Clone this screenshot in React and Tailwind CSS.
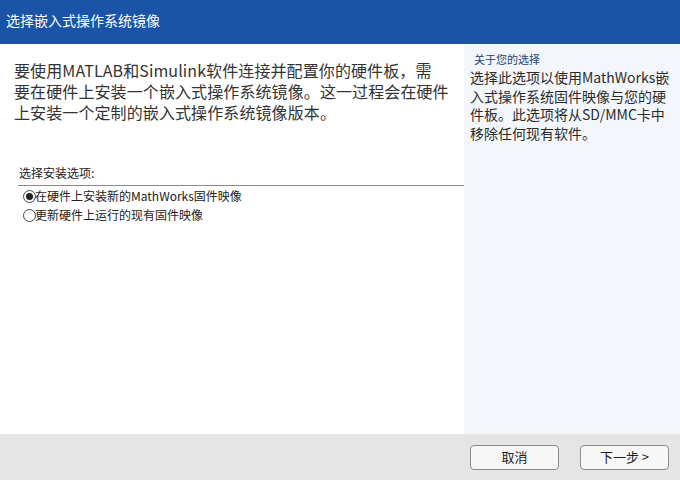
import React, { useState } from 'react';

const font = { fontFamily: '"Noto Sans CJK SC", "Noto Sans", sans-serif' };

const introLines = [
  '要使用MATLAB和Simulink软件连接并配置你的硬件板，需',
  '要在硬件上安装一个嵌入式操作系统镜像。这一过程会在硬件',
  '上安装一个定制的嵌入式操作系统镜像版本。',
];

const options = [
  '在硬件上安装新的MathWorks固件映像',
  '更新硬件上运行的现有固件映像',
];

const App = () => {
  const [selected, setSelected] = useState(0);

  return (
    <div className="w-[680px] h-[480px] flex flex-col bg-white overflow-hidden" style={font}>
      {/* Title bar */}
      <div className="h-[44px] bg-[#1b54a6] flex items-center px-[6px] pb-[3px] text-white text-[14px]">
        选择嵌入式操作系统镜像
      </div>

      {/* Body */}
      <div className="flex-1 flex">
        <div className="w-[464px] flex flex-col">
          <div className="pl-[14px] pr-[10px] pt-[16px] text-[16px] leading-[21px] text-[#333] tracking-[0.1px]">
            {introLines.map((line) => (
              <div key={line} className="whitespace-nowrap">{line}</div>
            ))}
          </div>
          <div className="mt-[41px] pl-[18px]">
            <div className="pl-px text-[12px] leading-[18px] text-[#222]">选择安装选项:</div>
            <div className="border-t border-[#8a8a8a] mt-[3px]" />
            <div className="flex flex-col pl-[5px]">
              {options.map((label, i) => (
                <label
                  key={label}
                  className="flex items-center h-[19px] text-[12px] text-[#222] cursor-pointer"
                  onClick={() => setSelected(i)}
                >
                  <span className="w-[13px] h-[13px] mt-[2px] -mr-px rounded-full border border-[#444] flex items-center justify-center bg-white">
                    {selected === i && <span className="w-[7px] h-[7px] rounded-full bg-[#222]" />}
                  </span>
                  <span>{label}</span>
                </label>
              ))}
            </div>
          </div>
        </div>

        {/* About panel */}
        <div className="flex-1 bg-[#f3f7fc] pl-[6px] pr-[10px] pt-[7px]">
          <div className="pl-[4px] text-[11px] leading-[16px] text-[#1d3f75]">关于您的选择</div>
          <p className="mt-[1px] text-[14px] leading-[18.5px] text-[#2b2b2b]">
            选择此选项以使用MathWorks嵌入式操作系统固件映像与您的硬件板。此选项将从SD/MMC卡中移除任何现有软件。
          </p>
        </div>
      </div>

      {/* Footer */}
      <div className="h-[46px] bg-[#e5e5e5] flex items-center justify-end gap-[21px] pr-[11px]">
        <button className="w-[89px] h-[25px] rounded-[4px] border border-[#8d8d8d] bg-[#f7f7f7] text-[13px] text-[#222]">
          取消
        </button>
        <button className="w-[89px] h-[25px] rounded-[4px] border border-[#8d8d8d] bg-[#f7f7f7] text-[13px] text-[#222]">
          下一步 &gt;
        </button>
      </div>
    </div>
  );
};

export default App;
